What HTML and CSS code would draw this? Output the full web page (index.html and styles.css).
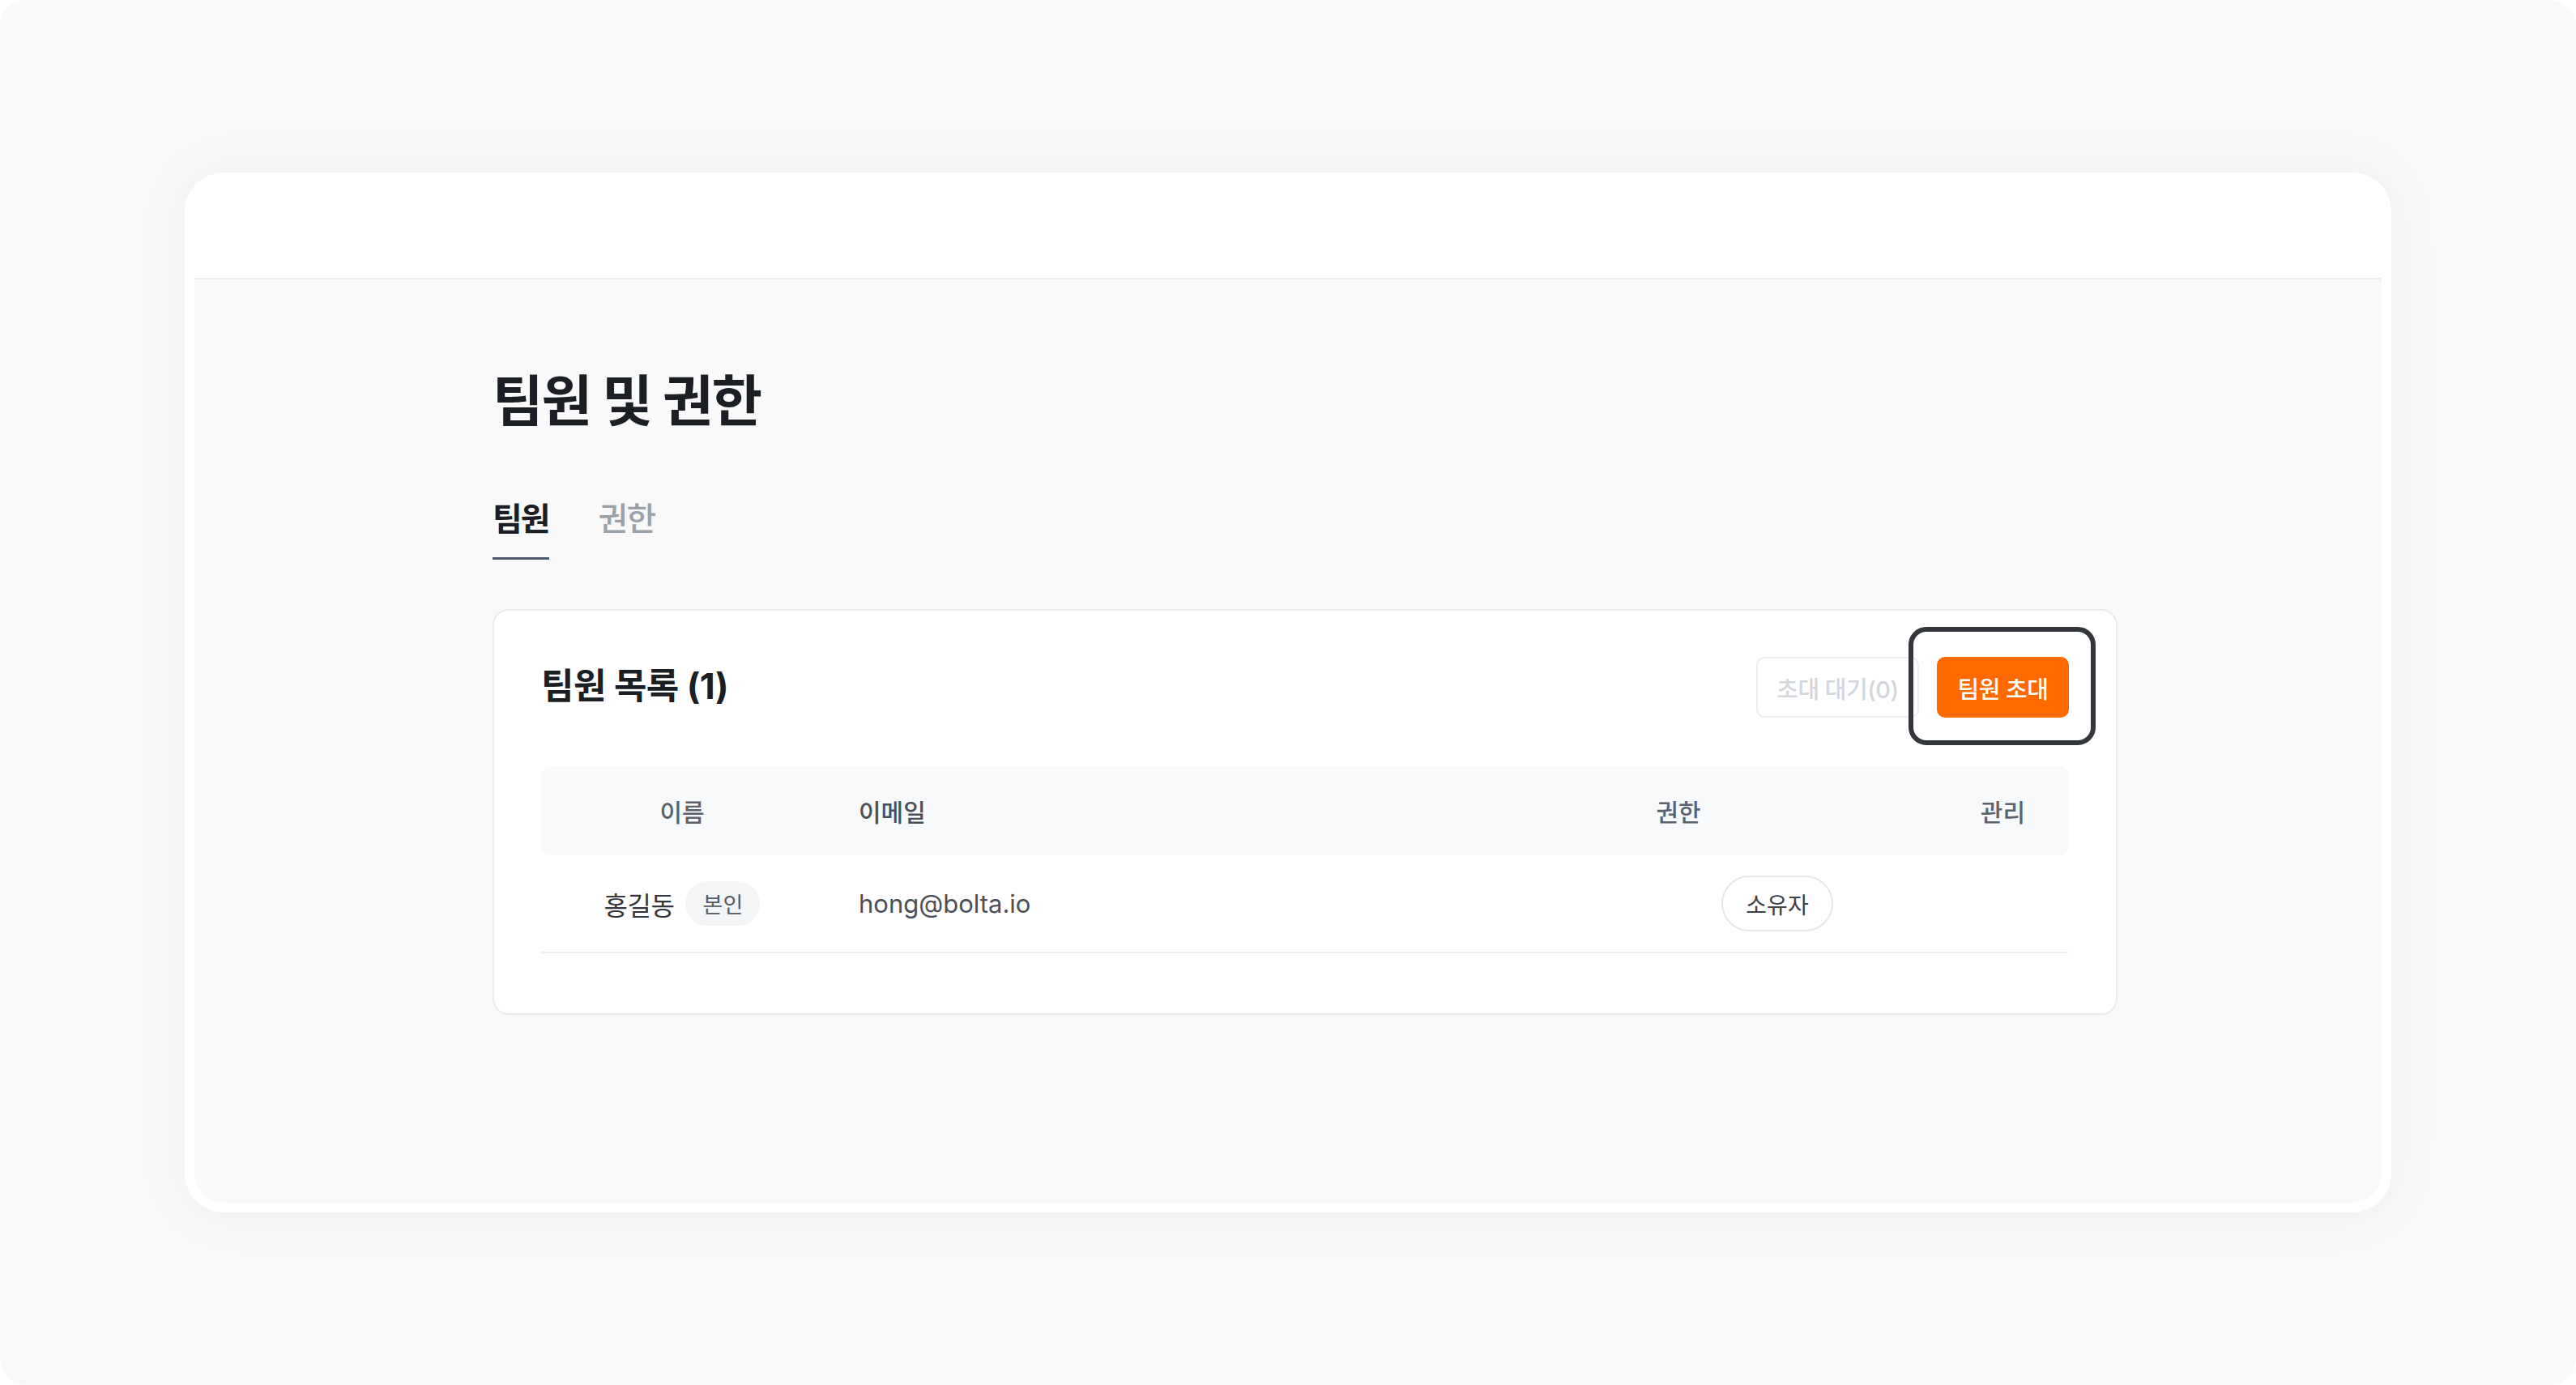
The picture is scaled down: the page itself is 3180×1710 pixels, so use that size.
FILE: index.html
```html
<!DOCTYPE html>
<html lang="ko">
<head>
<meta charset="utf-8">
<title>팀원 및 권한</title>
<link rel="stylesheet" href="styles.css">
</head>
<body>
<div class="screen">
  <div class="window">
    <div class="topbar"></div>
    <main class="content">
      <h1 class="page-title">팀원 및 권한</h1>
      <nav class="tabs">
        <div class="tab active">팀원</div>
        <div class="tab">권한</div>
      </nav>
      <section class="card">
        <div class="card-head">
          <h2 class="card-title">팀원 목록 (1)</h2>
          <div class="actions">
            <button class="btn btn-ghost" disabled>초대 대기(0)</button>
            <div class="focus-wrap">
              <button class="btn btn-primary">팀원 초대</button>
              <span class="focus-ring"></span>
            </div>
          </div>
        </div>
        <div class="table">
          <div class="thead">
            <div class="cell c-name">이름</div>
            <div class="cell c-email">이메일</div>
            <div class="cell c-role">권한</div>
            <div class="cell c-manage">관리</div>
          </div>
          <div class="trow">
            <div class="cell c-name"><span class="name">홍길동</span><span class="badge">본인</span></div>
            <div class="cell c-email">hong@bolta.io</div>
            <div class="cell c-role"><span class="role-pill">소유자</span></div>
            <div class="cell c-manage"></div>
          </div>
        </div>
      </section>
    </main>
  </div>
</div>
</body>
</html>
```

FILE: styles.css
```css
* { box-sizing: border-box; }
html, body { margin: 0; padding: 0; }
body {
  background: #ffffff;
  font-family: Inter, "Noto Sans CJK KR", "Noto Sans", sans-serif;
  width: 3180px;
  height: 1710px;
  overflow: hidden;
}
.screen {
  width: 3180px;
  height: 1710px;
  background: #f9f9f9;
  border-radius: 32px;
  padding: 213px 0 0 228px;
}
.window {
  width: 2724px;
  height: 1284px;
  background: #ffffff;
  border-radius: 48px;
  padding: 12px;
  display: flex;
  flex-direction: column;
  box-shadow: 0 0 70px 14px rgba(40, 40, 70, 0.035);
}
.topbar {
  height: 120px;
  flex: none;
  border-bottom: 2px solid #edeef1;
}
.content {
  flex: 1;
  background: #f9f9fa;
  border-radius: 0 0 36px 36px;
  padding: 106px 326px 0 368px;
}
.page-title {
  margin: 0;
  font-size: 68px;
  line-height: 88px;
  font-weight: 700;
  letter-spacing: -2px;
  color: #1b1f24;
}
.tabs {
  display: flex;
  gap: 61px;
  margin-top: 76px;
}
.tab {
  font-size: 40px;
  line-height: 52px;
  letter-spacing: -2px;
  font-weight: 500;
  color: #9ba1a9;
  padding-bottom: 21px;
  border-bottom: 3px solid transparent;
}
.tab.active {
  color: #1b1f24;
  font-weight: 700;
  border-bottom-color: #4b5870;
}
.card {
  margin-top: 61px;
  width: 2006px;
  background: #ffffff;
  border: 2px solid #ececef;
  border-radius: 20px;
  padding: 57px 58px 74px;
}
.card-head {
  display: flex;
  align-items: center;
  justify-content: space-between;
  height: 75px;
}
.card-title {
  margin: 0;
  font-size: 44px;
  line-height: 56px;
  margin-top: -4px;
  font-weight: 700;
  letter-spacing: -0.5px;
  color: #1b1f24;
}
.actions {
  display: flex;
  gap: 22px;
  align-items: center;
}
.btn {
  height: 75px;
  border-radius: 10px;
  font-family: inherit;
  font-size: 29px;
  font-weight: 500;
  letter-spacing: -0.5px;
  display: flex;
  align-items: center;
  justify-content: center;
}
.btn-ghost {
  background: #ffffff;
  border: 2px solid #eceef1;
  color: #d3d6db;
  width: 201px;
  padding: 0;
}
.btn-primary {
  background: #ff6a00;
  border: 2px solid #ff6a00;
  color: #ffffff;
  width: 163px;
  padding: 0;
}
.focus-wrap {
  position: relative;
}
.focus-ring {
  position: absolute;
  top: -37px;
  bottom: -34px;
  left: -35px;
  right: -33px;
  border: 6px solid #33363b;
  border-radius: 22px;
  pointer-events: none;
}
.table {
  margin-top: 60px;
}
.thead, .trow {
  display: grid;
  grid-template-columns: 348px 1fr 382px 291px;
  align-items: center;
}
.thead {
  height: 110px;
  background: #f8f9fa;
  border-radius: 12px;
  font-size: 30px;
  font-weight: 500;
  color: #5c636c;
}
.trow {
  height: 121px;
  border-bottom: 2px solid #eeeff1;
  font-size: 31px;
  color: #3a3f46;
}
.cell { display: flex; align-items: center; }
.c-name { justify-content: center; }
.c-email { padding-left: 44px; }
.thead .c-role { justify-content: center; }
.trow .c-role { justify-content: flex-end; }
.c-manage { justify-content: flex-end; padding-right: 54px; }
.name { font-size: 32px; letter-spacing: -0.5px; color: #33373d; }
.badge {
  margin-left: 14px;
  height: 55px;
  width: 92px;
  border-radius: 28px;
  background: #f4f5f7;
  color: #555b63;
  font-size: 27px;
  display: flex;
  align-items: center;
  justify-content: center;
}
.c-email { color: #4b5058; }
.role-pill {
  height: 69px;
  width: 138px;
  border: 2px solid #e6e8eb;
  border-radius: 35px;
  background: #ffffff;
  font-size: 28px;
  color: #3d4249;
  display: flex;
  align-items: center;
  justify-content: center;
}
```
